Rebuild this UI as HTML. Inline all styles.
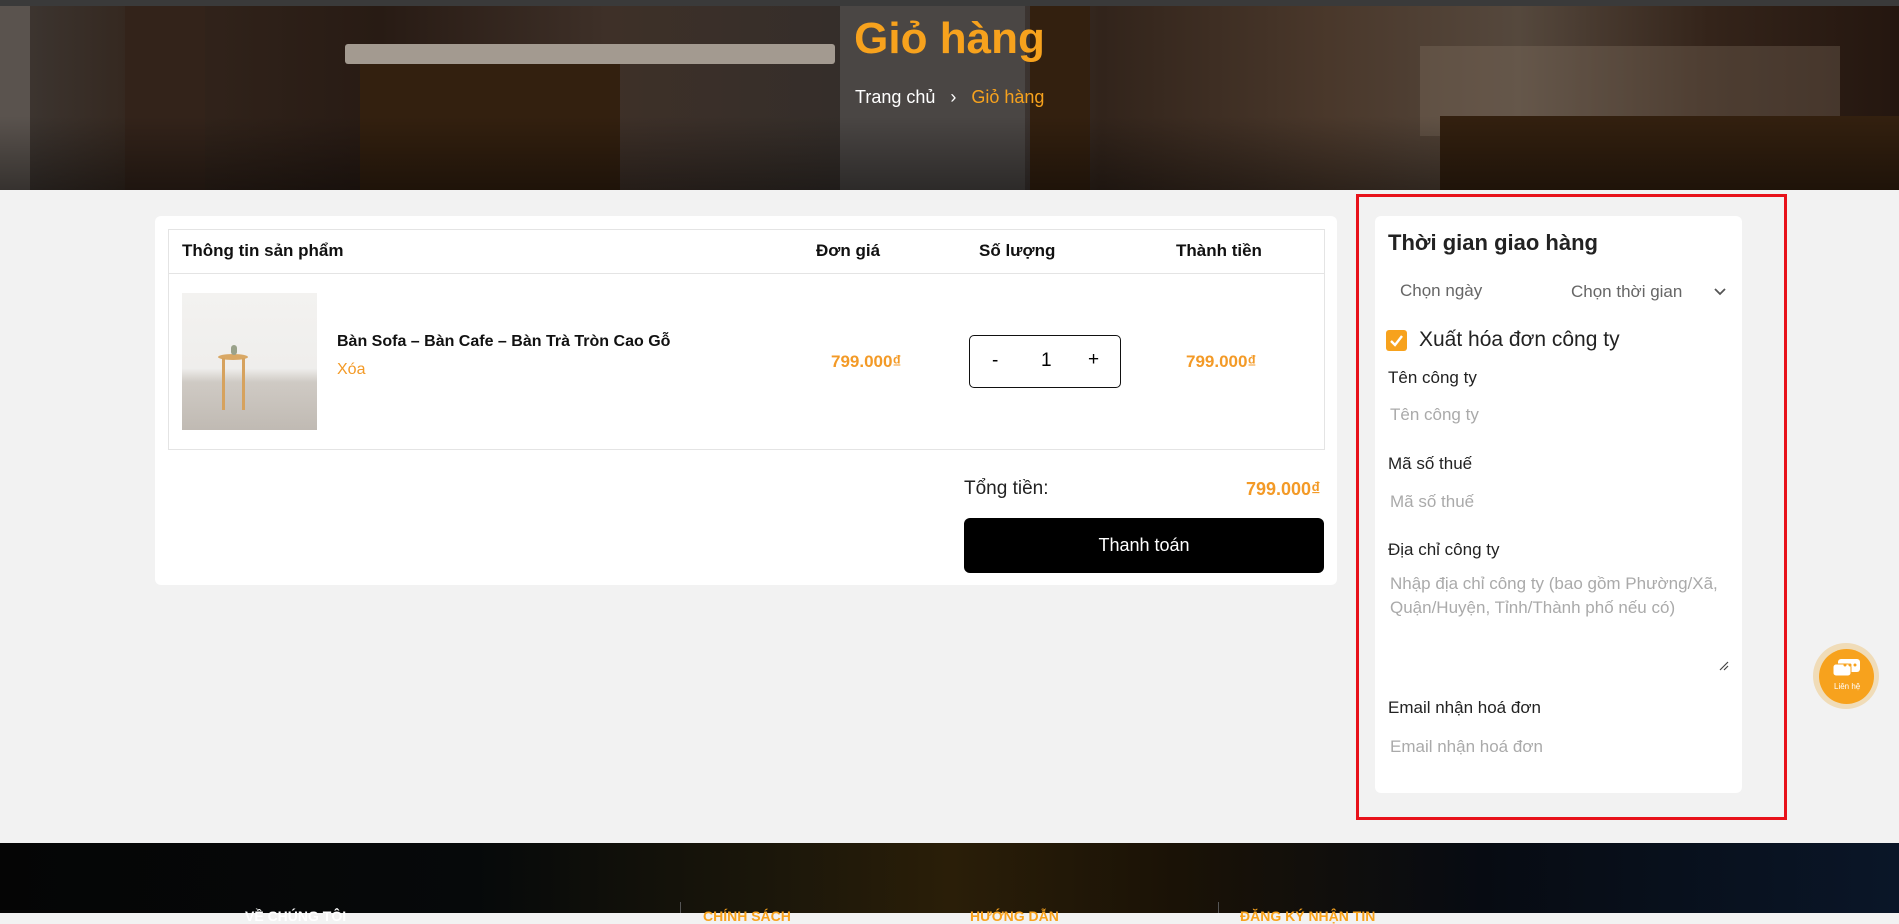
<!DOCTYPE html>
<html><head><meta charset="utf-8"><style>
*{margin:0;padding:0;box-sizing:border-box}
body{width:1899px;height:913px;overflow:hidden;background:#f2f2f2;font-family:"Liberation Sans",Arial,sans-serif;position:relative}
.abs{position:absolute}
#top{left:0;top:0;width:1899px;height:6px;background:#3a3a3a}
#banner{left:0;top:6px;width:1899px;height:184px;overflow:hidden;background:linear-gradient(90deg,#3e3834 0%,#33251c 8%,#281b14 20%,#3e3028 32%,#342e2a 45%,#403c3c 52%,#32241b 58%,#4a382b 70%,#55483d 80%,#34241a 90%,#24160f 100%)}
.p{position:absolute}
h1{position:absolute;left:0;width:1899px;top:8px;text-align:center;color:#f7a21d;font-size:44px;font-weight:bold}
.bc{position:absolute;top:81px;left:855px;font-size:18px;color:#fff}
.bc span{color:#f7a21d}
.card{background:#fff;border-radius:6px}
.th{position:absolute;top:241px;font-size:17px;font-weight:bold;color:#111}
.or{color:#f39a27;font-weight:bold;font-size:17px}
.lbl{position:absolute;left:1388px;font-size:17px;color:#222}
.ph{position:absolute;left:1390px;font-size:17px;color:#aaa}
</style></head><body>
<div id="top" class="abs"></div>
<div id="banner" class="abs">
 <div class="p" style="left:0;top:0;width:30px;height:184px;background:#5a534e"></div>
 <div class="p" style="left:125px;top:0;width:80px;height:184px;background:#33231a"></div>
 <div class="p" style="left:345px;top:38px;width:490px;height:20px;background:#a39a90;border-radius:3px"></div>
 <div class="p" style="left:360px;top:58px;width:260px;height:126px;background:#33200f"></div>
 <div class="p" style="left:840px;top:0;width:185px;height:184px;background:#4a4644"></div>
 <div class="p" style="left:1030px;top:0;width:60px;height:184px;background:#33200f"></div>
 <div class="p" style="left:1420px;top:40px;width:420px;height:90px;background:#8a7a6a;opacity:.3"></div>
 <div class="p" style="left:1440px;top:110px;width:459px;height:74px;background:#33200f"></div>
 <div class="p" style="left:0;top:110px;width:1899px;height:74px;background:linear-gradient(180deg,rgba(0,0,0,0),rgba(0,0,0,.4))"></div>
 <h1>Giỏ hàng</h1>
 <div class="bc">Trang chủ &nbsp;&nbsp;›&nbsp;&nbsp; <span>Giỏ hàng</span></div>
</div>

<div class="abs card" style="left:155px;top:216px;width:1182px;height:369px"></div>
<div class="abs" style="left:168px;top:229px;width:1157px;height:221px;border:1px solid #e4e4e4"></div>
<div class="abs" style="left:168px;top:273px;width:1157px;height:1px;background:#e4e4e4"></div>
<div class="th" style="left:182px">Thông tin sản phẩm</div>
<div class="th" style="left:816px">Đơn giá</div>
<div class="th" style="left:979px">Số lượng</div>
<div class="th" style="left:1176px">Thành tiền</div>
<div class="abs" style="left:182px;top:293px;width:135px;height:137px;background:linear-gradient(180deg,#f3f2f0 0%,#efeeec 55%,#cfcac4 65%,#c0bab3 100%)">
 <div class="p" style="left:36px;top:61px;width:30px;height:6px;background:#d9a865;border-radius:50%"></div>
 <div class="p" style="left:40px;top:65px;width:3px;height:52px;background:#d6a25e"></div>
 <div class="p" style="left:60px;top:65px;width:3px;height:52px;background:#d6a25e"></div>
 <div class="p" style="left:49px;top:52px;width:6px;height:10px;background:#9aa28a;border-radius:3px"></div>
</div>
<div class="abs" style="left:337px;top:333px;font-size:16px;font-weight:bold;color:#111">Bàn Sofa – Bàn Cafe – Bàn Trà Tròn Cao Gỗ</div>
<div class="abs" style="left:337px;top:361px;font-size:16px;color:#f39a27">Xóa</div>
<div class="abs or" style="left:831px;top:352px">799.000₫</div>
<div class="abs" style="left:969px;top:335px;width:152px;height:53px;border:1px solid #111;border-radius:5px;font-size:19px">
 <span class="p" style="left:22px;top:14px">-</span><span class="p" style="left:71px;top:14px">1</span><span class="p" style="left:118px;top:13px">+</span>
</div>
<div class="abs or" style="left:1186px;top:352px">799.000₫</div>
<div class="abs" style="left:964px;top:478px;font-size:19px;color:#222">Tổng tiền:</div>
<div class="abs or" style="left:1246px;top:479px;font-size:18px">799.000₫</div>
<div class="abs" style="left:964px;top:518px;width:360px;height:55px;background:#000;border-radius:6px;color:#fff;font-size:18px;text-align:center;line-height:55px">Thanh toán</div>

<div class="abs" style="left:1356px;top:194px;width:431px;height:626px;border:3px solid #e8121a"></div>
<div class="abs card" style="left:1375px;top:216px;width:367px;height:577px"></div>
<div class="abs" style="left:1388px;top:230px;font-size:22px;font-weight:bold;color:#222">Thời gian giao hàng</div>
<div class="abs" style="left:1400px;top:281px;font-size:17px;color:#666">Chọn ngày</div>
<div class="abs" style="left:1571px;top:282px;font-size:17px;color:#666">Chọn thời gian</div>
<svg class="abs" style="left:1713px;top:286px" width="14" height="10" viewBox="0 0 14 10"><path d="M2 3l5 5 5-5" fill="none" stroke="#555" stroke-width="1.8"/></svg>
<div class="abs" style="left:1386px;top:330px;width:21px;height:21px;background:#f7a21d;border-radius:3px"></div>
<svg class="abs" style="left:1386px;top:330px" width="21" height="21"><path d="M5 11l4 4 7-9" fill="none" stroke="#fff" stroke-width="2.4"/></svg>
<div class="abs" style="left:1419px;top:328px;font-size:21px;color:#222">Xuất hóa đơn công ty</div>
<div class="lbl" style="top:368px">Tên công ty</div>
<div class="ph" style="top:405px">Tên công ty</div>
<div class="lbl" style="top:454px">Mã số thuế</div>
<div class="ph" style="top:492px">Mã số thuế</div>
<div class="lbl" style="top:540px">Địa chỉ công ty</div>
<div class="ph" style="top:572px;width:340px;line-height:24px">Nhập địa chỉ công ty (bao gồm Phường/Xã, Quận/Huyện, Tỉnh/Thành phố nếu có)</div>
<svg class="abs" style="left:1718px;top:660px" width="12" height="12"><path d="M2 10L10 2M6 10L10 6" stroke="#444" stroke-width="1.2"/></svg>
<div class="lbl" style="top:698px">Email nhận hoá đơn</div>
<div class="ph" style="top:737px">Email nhận hoá đơn</div>

<div class="abs" style="left:1813px;top:643px;width:66px;height:66px;border-radius:50%;background:#f0dcb8"></div>
<div class="abs" style="left:1819px;top:649px;width:55px;height:55px;border-radius:50%;background:#f7a21d"></div>
<svg class="abs" style="left:1832px;top:657px" width="30" height="22"><rect x="6" y="2" width="22" height="13" rx="3" fill="#fff"/><rect x="1" y="7" width="18" height="12" rx="3" fill="#fff" stroke="#f7a21d" stroke-width="1"/><circle cx="13" cy="8" r="1.5" fill="#f7a21d"/><circle cx="18" cy="8" r="1.5" fill="#f7a21d"/><circle cx="23" cy="8" r="1.5" fill="#f7a21d"/></svg>
<div class="abs" style="left:1834px;top:682px;font-size:8px;color:#fff">Liên hệ</div>

<div class="abs" style="left:0;top:843px;width:1899px;height:70px;background:linear-gradient(90deg,#050505 0%,#06090a 25%,#1a160a 40%,#2a1e08 50%,#1a1206 62%,#070b12 78%,#0a1628 100%)"></div>
<div class="abs" style="left:245px;top:908px;font-size:14px;color:#fff;font-weight:bold">VỀ CHÚNG TÔI</div>
<div class="abs" style="left:680px;top:902px;width:1px;height:11px;background:#555"></div>
<div class="abs" style="left:703px;top:908px;font-size:14px;color:#f7a21d;font-weight:bold">CHÍNH SÁCH</div>
<div class="abs" style="left:970px;top:908px;font-size:14px;color:#f7a21d;font-weight:bold">HƯỚNG DẪN</div>
<div class="abs" style="left:1218px;top:902px;width:1px;height:11px;background:#555"></div>
<div class="abs" style="left:1240px;top:908px;font-size:14px;color:#f7a21d;font-weight:bold">ĐĂNG KÝ NHẬN TIN</div>
</body></html>
